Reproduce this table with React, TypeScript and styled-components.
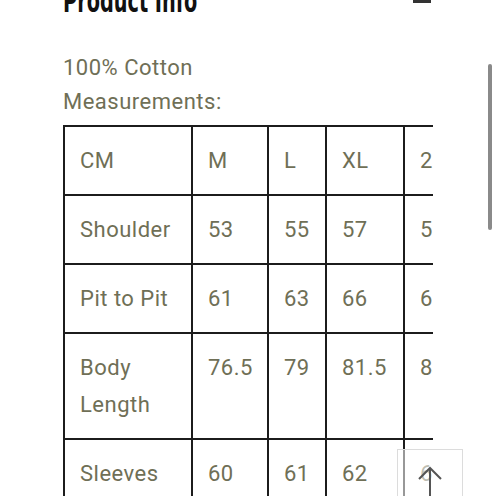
import React from "react";
import styled, { createGlobalStyle } from "styled-components";

const Global = createGlobalStyle`
  html, body { margin: 0; padding: 0; background: #fff; }
  body { width: 496px; height: 496px; overflow: hidden; }
`;

const Page = styled.div`
  position: relative;
  width: 496px;
  height: 496px;
  overflow: hidden;
  padding-left: 63px;
  box-sizing: border-box;
  font-family: Roboto, "Liberation Sans", sans-serif;
  color: #6f6f56;
`;

const HeaderRow = styled.div`
  display: flex;
  justify-content: space-between;
  align-items: flex-start;
  width: 368px;
  height: 0;
`;

const Heading = styled.h2`
  margin: -15px 0 0 0;
  font-family: "DejaVu Sans Condensed", "DejaVu Sans", sans-serif;
  font-weight: 700;
  font-size: 32px;
  line-height: 32px;
  color: #111;
  transform: scaleX(0.67);
  transform-origin: left top;
  white-space: nowrap;
`;

const Minus = styled.div`
  width: 18px;
  height: 3px;
  background: #333;
`;

const Notes = styled.div`
  padding-top: 51px;
  font-size: 22px;
  line-height: 34px;
  letter-spacing: 0.5px;
`;

const TableClip = styled.div`
  width: 370px;
  overflow: hidden;
  margin-top: 6px;
`;

const Table = styled.table`
  border-collapse: collapse;
  table-layout: fixed;
  width: 420px;
`;

const Cell = styled.td`
  border: 2px solid #1c1c1c;
  padding: 15px 6px 15px 15px;
  font-size: 22px;
  line-height: 37px;
  letter-spacing: 0.5px;
  vertical-align: top;
  text-align: left;
  color: #6f6f56;
  white-space: nowrap;
`;

const WrapCell = styled(Cell)`
  white-space: normal;
`;

const Scrollbar = styled.div`
  position: absolute;
  left: 488px;
  top: 64px;
  width: 4px;
  height: 166px;
  border-radius: 2px;
  background: #8a8a8a;
`;

const UpButton = styled.div`
  position: absolute;
  left: 397px;
  top: 449px;
  width: 66px;
  height: 60px;
  border: 1px solid #dcdcdc;
  background: rgba(255, 255, 255, 0.55);
  box-sizing: border-box;
  display: flex;
  justify-content: center;
`;

const cols = [128, 76, 58, 78, 80];

const rows: string[][] = [
  ["CM", "M", "L", "XL", "2XL"],
  ["Shoulder", "53", "55", "57", "59"],
  ["Pit to Pit", "61", "63", "66", "69"],
  ["Body Length", "76.5", "79", "81.5", "84"],
  ["Sleeves", "60", "61", "62", "63"],
];

export default function App() {
  return (
    <>
      <Global />
      <Page>
        <HeaderRow>
          <Heading>Product Info</Heading>
          <Minus />
        </HeaderRow>
        <Notes>
          <div>100% Cotton</div>
          <div>Measurements:</div>
        </Notes>
        <TableClip>
          <Table>
            <colgroup>
              {cols.map((w, i) => (
                <col key={i} style={{ width: w }} />
              ))}
            </colgroup>
            <tbody>
              {rows.map((r, i) => (
                <tr key={i}>
                  {r.map((c, j) =>
                    j === 0 ? (
                      <WrapCell key={j}>{c}</WrapCell>
                    ) : (
                      <Cell key={j}>{c}</Cell>
                    )
                  )}
                </tr>
              ))}
            </tbody>
          </Table>
        </TableClip>
        <Scrollbar />
        <UpButton>
          <svg width="28" height="48" viewBox="0 0 28 48" style={{ marginTop: 16 }}>
            <path d="M3 13 L14 2 L25 13 M14 2 L14 48" fill="none" stroke="#555" strokeWidth="2" />
          </svg>
        </UpButton>
      </Page>
    </>
  );
}
